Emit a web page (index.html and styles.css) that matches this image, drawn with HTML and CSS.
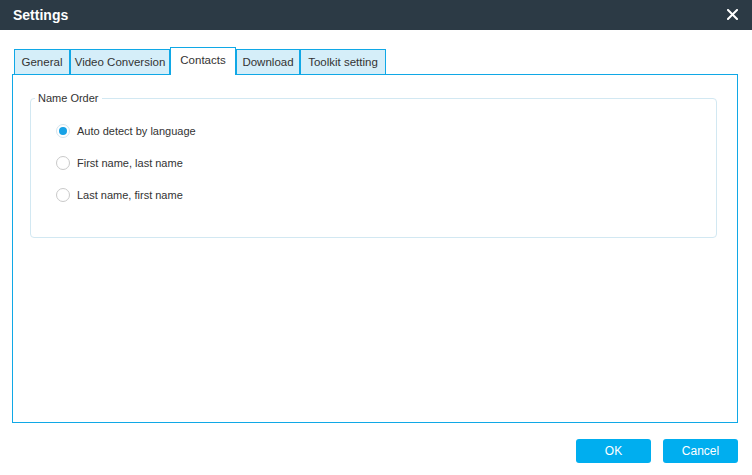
FILE: index.html
```html
<!DOCTYPE html>
<html>
<head>
<meta charset="utf-8">
<link rel="stylesheet" href="styles.css">
</head>
<body>
<div class="window">
  <div class="titlebar">
    <span class="title">Settings</span>
    <svg class="close" width="11" height="11" viewBox="0 0 11 11"><path d="M1 1 L10 10 M10 1 L1 10" stroke="#fff" stroke-width="2" stroke-linecap="square"/></svg>
  </div>
  <div class="body">
    <div class="tabs">
      <div class="tab t-general">General</div>
      <div class="tab t-video">Video Conversion</div>
      <div class="tab active t-contacts">Contacts</div>
      <div class="tab t-download">Download</div>
      <div class="tab t-toolkit">Toolkit setting</div>
    </div>
    <div class="panel">
      <fieldset class="group">
        <legend>Name Order</legend>
        <label class="radio-row"><span class="radio checked"></span><span>Auto detect by language</span></label>
        <label class="radio-row"><span class="radio"></span><span>First name, last name</span></label>
        <label class="radio-row"><span class="radio"></span><span>Last name, first name</span></label>
      </fieldset>
    </div>
    <div class="buttons">
      <button class="btn">OK</button>
      <button class="btn">Cancel</button>
    </div>
  </div>
</div>
</body>
</html>
```
FILE: styles.css
```css
html, body {
  margin: 0;
  padding: 0;
  background: #fff;
}
body {
  font-family: "Liberation Sans", Arial, sans-serif;
  font-size: 11px;
  color: #333;
  width: 752px;
  height: 475px;
  overflow: hidden;
}
.titlebar {
  height: 30px;
  background: #2c3a45;
  display: flex;
  align-items: center;
  justify-content: space-between;
  padding: 0 14px 0 13px;
}
.title {
  color: #fff;
  font-weight: bold;
  font-size: 14px;
}
.close {
  display: block;
  margin-top: -1px;
}
.body {
  padding: 17px 14px 0 12px;
}
.tabs {
  display: flex;
  align-items: flex-end;
  padding-left: 2px;
  height: 27px;
}
.tab {
  box-sizing: border-box;
  height: 25px;
  background: #d5eef9;
  border: 1px solid #10a8e6;
  border-bottom: none;
  display: flex;
  align-items: center;
  justify-content: center;
  font-size: 11.5px;
  color: #333;
}
.tab.active {
  height: 28px;
  background: #fff;
  position: relative;
  top: 1px;
  padding-bottom: 3px;
  z-index: 1;
}
.t-general { width: 56px; }
.t-video { width: 100px; }
.t-contacts { width: 66px; }
.t-download { width: 64px; }
.t-toolkit { width: 86px; }
.panel {
  box-sizing: border-box;
  width: 726px;
  height: 349px;
  border: 1px solid #10a8e6;
  padding: 17px 0 0 17px;
}
.group {
  box-sizing: border-box;
  width: 687px;
  height: 146px;
  margin: 0;
  border: 1px solid #d2e8f2;
  border-radius: 4px;
  padding: 19px 0 0 8px;
  display: flex;
  flex-direction: column;
  gap: 16px;
}
.group legend {
  padding: 0 3px;
  margin-left: -4px;
  font-size: 11px;
  color: #333;
}
.radio-row {
  display: flex;
  align-items: center;
  gap: 7px;
  height: 16px;
  margin-left: 17px;
  font-size: 11px;
}
.radio {
  box-sizing: border-box;
  width: 14px;
  height: 14px;
  border-radius: 50%;
  border: 1px solid #c9c9c9;
  background: #fff;
  display: flex;
  align-items: center;
  justify-content: center;
}
.radio.checked {
  border-color: #d6e4ec;
}
.radio.checked::after {
  content: "";
  width: 8px;
  height: 8px;
  border-radius: 50%;
  background: #17a2e6;
}
.buttons {
  display: flex;
  justify-content: flex-end;
  gap: 12px;
  margin-top: 16px;
}
.btn {
  width: 75px;
  height: 24px;
  border: none;
  border-radius: 3px;
  background: #00aeef;
  color: #fff;
  font-family: "Liberation Sans", Arial, sans-serif;
  font-size: 12px;
  padding: 0;
}
```
